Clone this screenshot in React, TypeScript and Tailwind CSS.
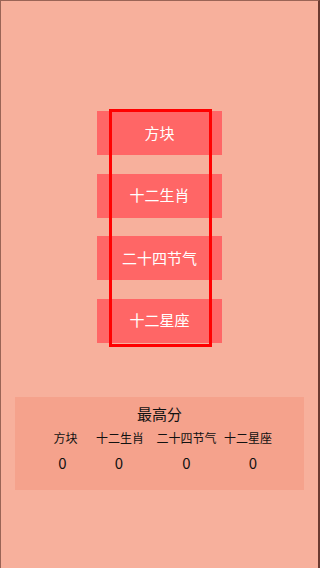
import React from 'react'

const games = ['方块', '十二生肖', '二十四节气', '十二星座']

export default function App() {
  return (
    <main
      className="flex h-[568px] w-[320px] flex-col border-l border-t border-r-2 border-[#9a6456] border-r-[#6b3a30] bg-[#f7b09c]"
      style={{ fontFamily: '"Noto Sans CJK SC", "Noto Sans", sans-serif' }}
    >
      <div className="relative mx-auto mt-[110px] w-[125px]">
        <div className="flex flex-col gap-[18.5px]">
          {games.map((g) => (
            <button
              key={g}
              className="flex h-[44px] w-full items-center justify-center bg-[#ff6666] text-[15px] text-white"
            >
              {g}
            </button>
          ))}
        </div>
        <div className="pointer-events-none absolute left-[12px] top-[-2px] h-[238px] w-[103px] border-[3px] border-[#ff0000]" />
      </div>

      <section className="mx-[14px] mt-[54px] h-[93px] bg-[#f5a28c] text-[#111]">
        <h2 className="pt-[7px] text-center text-[15px] leading-[20px]">最高分</h2>
        <div className="mt-[6px] flex pl-[25px] text-[12px] leading-[16px]">
          <span className="w-[51px] text-center">方块</span>
          <span className="w-[58px] text-center">十二生肖</span>
          <span className="w-[75px] text-center">二十四节气</span>
          <span className="w-[48px] text-center">十二星座</span>
        </div>
        <div className="mt-[7px] flex pl-[25px] text-[15px] leading-[20px]">
          <span className="w-[45px] text-center">0</span>
          <span className="w-[68px] text-center">0</span>
          <span className="w-[67px] text-center">0</span>
          <span className="w-[66px] text-center">0</span>
        </div>
      </section>
    </main>
  )
}
